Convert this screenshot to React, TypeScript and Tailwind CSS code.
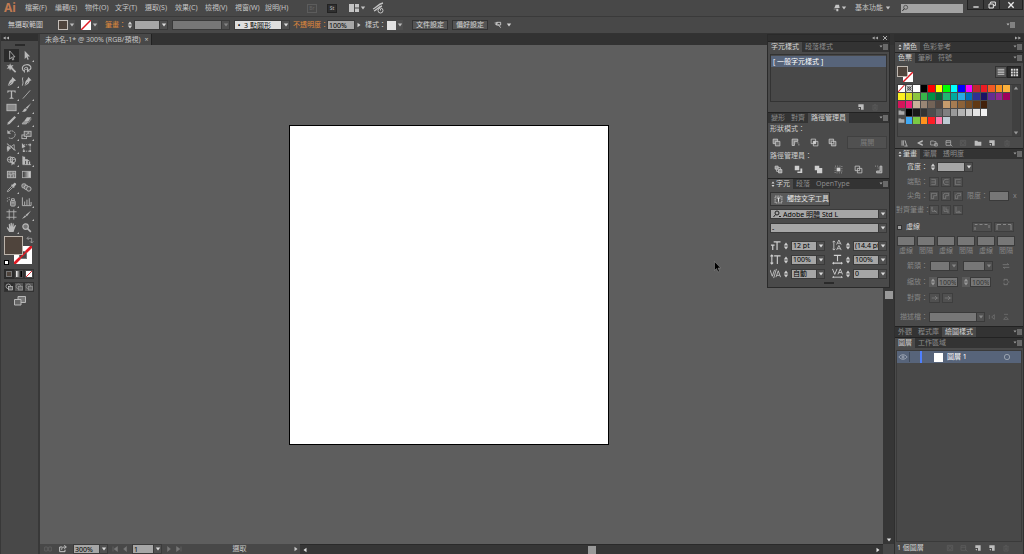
import React, { useState } from 'react';
import clsx from 'clsx';

const menus = ['檔案(F)', '編輯(E)', '物件(O)', '文字(T)', '選取(S)', '效果(C)', '檢視(V)', '視窗(W)', '說明(H)'];

// ---------------------------------------------------------------------------
// Icons
// ---------------------------------------------------------------------------

interface IconProps {
    children: React.ReactNode;
    className?: string;
}

// Every icon is drawn on a 12x12 grid
const Icon: React.FC<IconProps> = ({ children, className = 'size-3' }) => (
    <svg viewBox="0 0 12 12" fill="none" stroke="currentColor" className={clsx('shrink-0', className)} aria-hidden="true">
        {children}
    </svg>
);

const DownArrow = () => (
    <svg viewBox="0 0 6 4" className="h-1 w-1.5 shrink-0" fill="currentColor" aria-hidden="true">
        <path d="M0.8 0.5h4.4L3 3.5z" />
    </svg>
);

const MenuIcon = () => (
    <svg viewBox="0 0 10 8" className="h-2 w-2.5" fill="currentColor" aria-hidden="true">
        <path d="M0.5 2.5h3L2 4.5zM4 1.5h5v1H4zM4 3.5h5v1H4zM4 5.5h5v1H4z" />
    </svg>
);

const CollapseIcon = ({ flip = false }: { flip?: boolean }) => (
    <svg viewBox="0 0 8 6" className={clsx('h-1.5 w-2', flip && 'rotate-180')} fill="currentColor" aria-hidden="true">
        <path d="M3.700 1.500v3L1 3zM7 1.500v3L4.300 3z" />
    </svg>
);

const icons: Record<string, React.ReactNode> = {
    select: <path d="M4 1v9l2-2 1.300 3 1.200-.6L7.300 7.500H9.800z" strokeWidth=".9" />,
    direct: <path d="M4 .8v9l2-2 1.300 3 1.200-.6L7.200 7.200H10z" fill="currentColor" stroke="none" />,
    wand: <><path d="M6 5.500l4.500 4.500" strokeWidth="1.800" /><path d="M4.500.3l.9 2.500 2.800-.7-1.700 2.200 1.900 2-2.800-.3-1.200 2.500-.9-2.600-2.800.3 2-2L.7 2.200l2.900.4z" fill="currentColor" stroke="none" /></>,
    lasso: <><path d="M3.500 9C1.500 8 1 5.500 2 3.800 3.500 1.500 8 1.300 9.800 3c1.800 1.700 1 4-.8 4.700" strokeWidth="1.300" /><path d="M3.500 6.500c0-2 3.500-2.500 4-1 .3 1.500-3 2-4 1zM3.800 7.500v3" /><path d="M6.500 5v5.500l1.300-1.300h2z" fill="currentColor" stroke="none" /></>,
    pen: <><path d="M7 1l4 4-2.500 1C8 8.500 6 10 2 11c1-4 2-6.500 4-7.500z" fill="currentColor" stroke="none" /><path d="M2.500 10.500L6 7" stroke="#484848" strokeWidth=".7" /></>,
    curvature: <><path d="M8 1l3.500 3.500-2 1C9 8 7.500 9.500 4 10.500c.5-3.500 1-6 3-7z" fill="currentColor" stroke="none" /><path d="M4.500 10L7.500 6.500" stroke="#484848" strokeWidth=".7" /><path d="M2 1.500C.5 4 3.500 6 1.500 10.500" /></>,
    type: <path d="M1.500 1.500h9v2.500h-.8l-.7-1.300H6.700v6.700l1.500.4v.7H3.800v-.7l1.500-.4V2.700H3l-.7 1.300h-.8z" fill="currentColor" stroke="none" />,
    line: <path d="M2 10.500L10 1.500" strokeWidth=".9" />,
    rect: <rect x="1" y="2.500" width="10" height="7" fill="#8a8a8a" />,
    brush: <path d="M11.300 1L6.700 7.500 5.200 6.300zM4.700 6.700l1.700 1.500C6 10.500 3.500 11 .8 10.500 3 9.700 2.500 7.700 4.700 6.700z" fill="currentColor" stroke="none" />,
    pencil: <path d="M9.300 1.200l1.600 1.600L4 9.700l-2.700 1 1-2.700z" fill="currentColor" stroke="none" />,
    eraser: <><path d="M6.500 2.500h4.800L8 7H3.200z" fill="currentColor" stroke="none" /><path d="M2.700 7.500h4.600L5.800 9.800H1.200z" strokeWidth=".8" fill="#8f8f8f" /><path d="M11.300 3v2L8 9.500V7.300z" fill="#888" stroke="none" /></>,
    rotate: <><path d="M3.500 2.800C6 1 10 2.500 10 6s-4 5.500-7 3.500" strokeDasharray="2 .7" /><path d="M1.500 1.200v4h4z" fill="currentColor" stroke="none" /></>,
    scale: <><rect x="1" y="6.500" width="5" height="4" /><rect x="3.500" y="2.500" width="7.500" height="5.500" fill="#666" /><path d="M5.500 6.500l3-2.500M8.500 5.500V4H7" strokeWidth=".8" /></>,
    width: <><path d="M1 2c2.500 0 2 3 4 3s2-2 4-2M1 10c2 0 3-4 5-4s2 3 4.500 3" /><path d="M2.500 4v6M4.500 3.500l4 5M9 3v6" strokeWidth=".8" /><path d="M1.500 5l3 1.500-3 2z" fill="currentColor" /></>,
    transform: <><rect x="3" y="3" width="7" height="7" strokeDasharray="1.200 1" /><path d="M1 1v6l1.700-1.500H5z" fill="currentColor" stroke="none" /><path d="M9 2h2v2H9zM9 9h2v2H9zM2 9h2v2H2z" fill="currentColor" stroke="none" /></>,
    shape: <><circle cx="4.500" cy="5" r="3" /><circle cx="7.500" cy="5.500" r="3" /><path d="M1.500 5h9M5 2v6" strokeWidth=".7" /><path d="M6 5.500v6l1.500-1.500h2.500z" fill="currentColor" stroke="none" /></>,
    perspective: <><path d="M2 1v9.500h9M2 3.500l5 2.500M2 6h7" strokeWidth=".9" /><path d="M2 2h2.500v8H2zM5.500 4.500h2v6h-2zM8.500 7h1.500v3.500H8.500z" fill="currentColor" stroke="none" /></>,
    mesh: <><rect x="1.500" y="2.500" width="9" height="7" fill="#777" /><path d="M1.500 6c2-2 3.500 2 5 0s2.500-1 4 0M4.500 2.500c-1.500 2.500 1.500 4 0 7M8 2.500c-1.500 2.500 1 4 0 7" strokeWidth=".8" /></>,
    gradient: <><defs><linearGradient id="toolGradient"><stop offset="0" stopColor="#333" /><stop offset="1" stopColor="#ddd" /></linearGradient></defs><rect x="1.500" y="2.500" width="9" height="7" fill="url(#toolGradient)" strokeWidth=".8" /></>,
    eyedropper: <><path d="M7 3l2-2c1-.6 2.600 1 2 2L9 5l.5.5-1 1-3-3 1-1z" fill="currentColor" stroke="none" /><path d="M6.300 4.500L2 9l-.5 1.500L3 10l4.500-4.300" strokeWidth=".9" /></>,
    blend: <><rect x="1" y="2" width="4.500" height="4.500" rx="1.500" fill="#777" /><circle cx="5.800" cy="6" r="2.300" fill="#666" /><circle cx="8.500" cy="7.500" r="2.500" fill="#555" /></>,
    spray: <><rect x="5" y="5" width="5" height="6" rx="1" fill="#777" /><path d="M6 5V3h3v2M6 7.500h3" /><path d="M1 2h1v1H1zM3 1h1v1H3zM3 3.500h1v1H3zM1 5h1v1H1z" fill="currentColor" stroke="none" /></>,
    graph: <path d="M1.500 1.500v9h9.500v-4M4 10V6M6.500 10V4M9 10V2.500" />,
    artboard: <path d="M3.500.5v11M8.500.5v11M.5 3h11M.5 9h11" strokeWidth=".9" />,
    slice: <path d="M11 1.500L6.500 8 4.700 6.700zM4.200 7.200l1.500 1.300L1 11z" fill="currentColor" stroke="none" />,
    hand: <path d="M3.500 11L1 6.800c-.5-1 .8-1.300 1.300-.6L3.400 7.500 3 2.700c0-.9 1.200-.9 1.300 0l.5 2.600.2-3.900c.1-.9 1.300-.9 1.400 0l.1 3.900.7-3.400c.2-.8 1.400-.6 1.300.3L8.200 5.800 9.600 3.600c.5-.7 1.500-.2 1.200.6L9 8.500 8.300 11z" fill="currentColor" stroke="none" />,
    zoom: <><circle cx="5" cy="5" r="3" fill="#777" strokeWidth="1.300" /><path d="M7.200 7.200l3.500 3.500" strokeWidth="1.800" /></>,
    newItem: <><path d="M2 2h8v8H6V6H2z" fill="currentColor" stroke="none" /><path d="M2 7.500h2.500V10z" fill="currentColor" stroke="none" /></>,
    trash: <path d="M2 3.500h8M5 3V2h2v1M3 4v6.500h6V4M5 5v4M7 5v4" strokeWidth=".9" />,
    folder: <path d="M1 2.500h4l1 1.500h5v6H1z" fill="currentColor" stroke="none" />,
    swap: <path d="M1 4h9L8 2M11 8H2l2 2" />,
    flip: <path d="M2 3v6M9.500 2.500v7L5.500 6z" />,
    libs: <path d="M1.500 2v8M3.500 2v8M6 2l2.500 8M5 10.500h5" strokeWidth="1.300" />,
    kinds: <path d="M10 1.500v3L5 6l5 1.500v3L2 6.500v-1z" fill="currentColor" stroke="none" />,
    swatchGroup: <path d="M1 3h4l1 1h3v5H1zM7 6.500h4v4H7z" />,
    options: <path d="M1.500 2.500h7v7h-7zM1.500 5h7M8 8l3 3" />,
    locate: <path d="M2 2h8v8H2zM4 4h4v4H4z" />,
};

interface Tool {
    icon: string;
    name: string;
    more?: boolean;
}

const toolGroups: Tool[][] = [
    [
        { icon: 'select', name: '選取工具' }, { icon: 'direct', name: '直接選取工具', more: true },
        { icon: 'wand', name: '魔術棒工具' }, { icon: 'lasso', name: '套索工具' },
        { icon: 'pen', name: '鋼筆工具', more: true }, { icon: 'curvature', name: '曲線工具' },
        { icon: 'type', name: '文字工具', more: true }, { icon: 'line', name: '線段區段工具', more: true },
        { icon: 'rect', name: '矩形工具', more: true }, { icon: 'brush', name: '繪圖筆刷工具', more: true },
        { icon: 'pencil', name: '鉛筆工具', more: true }, { icon: 'eraser', name: '橡皮擦工具', more: true },
    ],
    [
        { icon: 'rotate', name: '旋轉工具', more: true }, { icon: 'scale', name: '縮放工具', more: true },
        { icon: 'width', name: '寬度工具', more: true }, { icon: 'transform', name: '任意變形工具' },
        { icon: 'shape', name: '形狀建立程式工具', more: true }, { icon: 'perspective', name: '透視格點工具', more: true },
    ],
    [
        { icon: 'mesh', name: '網格工具' }, { icon: 'gradient', name: '漸層工具' },
        { icon: 'eyedropper', name: '檢色滴管工具', more: true }, { icon: 'blend', name: '漸變工具' },
    ],
    [
        { icon: 'spray', name: '符號噴灑器工具', more: true }, { icon: 'graph', name: '長條圖工具', more: true },
        { icon: 'artboard', name: '工作區域工具' }, { icon: 'slice', name: '切片工具', more: true },
        { icon: 'hand', name: '手形工具', more: true }, { icon: 'zoom', name: '放大鏡工具' },
    ],
];

// Swatch library, 'none' and 'reg' are the two special swatches
const swatchRows = [
    ['none', 'reg', '#ffffff', '#000000', '#ff0000', '#ffff00', '#00ff00', '#00ffff', '#0000ff', '#ff00ff', '#c1272d', '#ed1c24', '#f15a24', '#f7931e', '#fbb03b'],
    ['#fcee21', '#d9e021', '#8cc63f', '#39b54a', '#009245', '#006837', '#22b573', '#00a99d', '#29abe2', '#0071bc', '#2e3192', '#1b1464', '#662d91', '#93278f', '#9e005d'],
    ['#d4145a', '#ed1e79', '#c7b299', '#998675', '#736357', '#534741', '#c69c6d', '#a67c52', '#8c6239', '#754c24', '#603813', '#42210b'],
];
const grayGroup = ['#000000', '#1a1a1a', '#333333', '#4d4d4d', '#666666', '#808080', '#999999', '#b3b3b3', '#cccccc', '#e6e6e6', '#f2f2f2'];
const brightGroup = ['#3fa9f5', '#7ac943', '#ff931e', '#ff1d25', '#ff7bac', '#bdccd4'];

// ---------------------------------------------------------------------------
// Shared controls
// ---------------------------------------------------------------------------

const Slash = ({ className = '' }: { className?: string }) => (
    <svg viewBox="0 0 10 10" preserveAspectRatio="none" className={clsx('block bg-white', className)} aria-hidden="true">
        <path d="M0 10L10 0" stroke="#e01b24" strokeWidth="1.500" />
    </svg>
);

interface DropdownProps {
    id: string;
    label?: string;
    value?: string;
    className?: string;
    dim?: boolean;
    light?: boolean;
    search?: boolean;
}

const Dropdown: React.FC<DropdownProps> = ({ id, label, value = '', className, dim, light, search }) => (
    <div className={clsx('relative h-2.5 shrink-0', className)}>
        <select
            id={id}
            aria-label={label}
            className={clsx(
                'block h-full w-full appearance-none border border-[#3a3a3a] py-0 pr-2 leading-none outline-none',
                search ? 'pl-3' : 'pl-px',
                dim ? 'bg-[#777] text-[#444]' : light ? 'bg-[#dedede] text-black' : 'bg-[#a6a6a6] text-black'
            )}
        >
            <option>{value}</option>
        </select>
        <span className={clsx('pointer-events-none absolute inset-y-0 right-0 flex w-[9px] items-center justify-center border border-[#3a3a3a] bg-[#505050]', dim ? 'text-[#858585]' : 'text-[#dcdcdc]')}>
            <DownArrow />
        </span>
    </div>
);

const Stepper = ({ dim = false }: { dim?: boolean }) => (
    <div className={clsx('flex h-2.5 w-2 shrink-0 flex-col items-center justify-center', dim ? 'bg-[#5a5a5a] text-[#999]' : 'text-[#d0d0d0]')}>
        <button aria-label="增加" className="h-1 rotate-180"><DownArrow /></button>
        <button aria-label="減少" className="h-1"><DownArrow /></button>
    </div>
);

interface FieldProps {
    id: string;
    label?: string;
    value?: string;
    className?: string;
    dim?: boolean;
}

const Field: React.FC<FieldProps> = ({ id, label, value = '', className, dim }) => (
    <input
        id={id}
        aria-label={label}
        defaultValue={value}
        className={clsx('h-2.5 min-w-0 shrink-0 rounded-none border border-[#3a3a3a] px-px leading-none outline-none', dim ? 'bg-[#777] text-[#333]' : 'bg-[#a6a6a6] text-black', className)}
    />
);

interface TabsProps {
    tabs: string[];
    initial: string;
    collapsible?: boolean;
}

const PanelTabs: React.FC<TabsProps> = ({ tabs, initial, collapsible }) => {
    const [active, setActive] = useState(initial);

    return (
        <div className="flex h-[11px] shrink-0 items-stretch border-t border-[#222] bg-[#333]" role="tablist">
            {tabs.map(tab => (
                <button
                    key={tab}
                    role="tab"
                    aria-selected={tab === active}
                    onClick={() => setActive(tab)}
                    className={clsx('flex items-center gap-px px-[3px]', tab === active ? 'bg-[#4a4a4a] text-[#d6d6d6]' : 'text-[#8c8c8c]')}
                >
                    {collapsible && tab === initial && (
                        <svg viewBox="0 0 4 8" className="h-2 w-1" fill="currentColor" aria-hidden="true"><path d="M.5 3.500L2 1.500l1.500 2zM.5 5L2 7l1.500-2z" /></svg>
                    )}
                    {tab}
                </button>
            ))}
            <button aria-label="面板選單" className="ml-auto text-[#a0a0a0]"><MenuIcon /></button>
        </div>
    );
};

const IconButton: React.FC<{ icon: string; label: string; dim?: boolean }> = ({ icon, label, dim }) => (
    <button aria-label={label} className={clsx('flex items-center', dim ? 'text-[#606060]' : 'text-[#bdbdbd]')}>
        <Icon className="size-2">{icons[icon]}</Icon>
    </button>
);

// ---------------------------------------------------------------------------
// Top bars
// ---------------------------------------------------------------------------

const MenuBar = () => (
    <header className="flex h-4 shrink-0 items-center bg-[#484848] text-[#c4c4c4]">
        <span className="w-[25px] pl-1 text-[12px] leading-4 font-bold text-[#c07a52]">Ai</span>
        <nav className="flex items-center">
            {menus.map(menu => (
                <button key={menu} className="w-[30px] shrink-0 text-left whitespace-nowrap">{menu}</button>
            ))}
        </nav>
        <div className="flex items-center pl-3">
            <button className="h-[9px] w-[10px] border border-[#5c5c5c] text-[5px] leading-[7px] text-[#666]">Br</button>
            <button className="ml-2.5 h-[9px] w-[10px] border border-[#222] bg-[#2f2f2f] text-[5px] leading-[7px] text-[#bbb]">St</button>
            <button aria-label="排列文件" className="ml-3 flex items-center gap-px">
                <svg viewBox="0 0 10 8" className="h-2 w-2.5" fill="currentColor" aria-hidden="true"><path d="M0 0h5v8H0zM6 0h4v3.500H6zM6 4.500h4V8H6z" /></svg>
                <DownArrow />
            </button>
            <button aria-label="GPU 效能" className="ml-1.5">
                <Icon>
                    <path d="M1 7c3-1 5-5 10-6M2 9c3-1 4-4 8-5" strokeWidth="1.300" />
                    <circle cx="8.500" cy="8.500" r="2.500" />
                    <path d="M8.500 7v1.500" />
                </Icon>
            </button>
        </div>
        <div className="ml-auto flex h-full items-center">
            <button aria-label="同步設定" className="flex items-center">
                <Icon className="size-2"><path d="M4 1h5l1 5H2zM1 7h7v1H1zM5 8v3h3V8" fill="currentColor" stroke="none" /></Icon>
                <DownArrow />
            </button>
            <button className="ml-2 flex items-center gap-0.5 whitespace-nowrap">基本功能<DownArrow /></button>
            <label className="ml-2.5 flex h-[9px] w-[62px] items-center bg-[#a3a3a3] text-[#333]">
                <Icon className="size-2"><circle cx="7" cy="5" r="3" /><path d="M5 7l-3 3.500" strokeWidth="1.500" /></Icon>
                <input type="search" aria-label="搜尋" className="w-full min-w-0 bg-transparent outline-none" />
            </label>
            <div className="mr-px ml-1 flex h-2.5 self-start border border-t-0 border-[#222] bg-[#3c3c3c] text-[#e8e8e8]">
                <button aria-label="最小化" className="flex w-4 items-center justify-center border-r border-[#222]"><Icon className="size-2"><path d="M2 9h8" strokeWidth="2" /></Icon></button>
                <button aria-label="還原" className="flex w-4 items-center justify-center border-r border-[#222]"><Icon className="size-2"><path d="M4 4V1.500h7V7H8.500M1.500 4.500h6.500v6H1.500z" strokeWidth="1.500" /></Icon></button>
                <button aria-label="關閉" className="flex w-[22px] items-center justify-center"><Icon className="size-2"><path d="M2 2l8 8M10 2l-8 8" strokeWidth="2" /></Icon></button>
            </div>
        </div>
    </header>
);

const SmallArrow = ({ label }: { label: string }) => (
    <button aria-label={label} className="flex h-2.5 w-[7px] items-center justify-center bg-[#4e4e4e] text-[#bbb]"><DownArrow /></button>
);

const OptionsBar = () => (
    <div className="flex h-[18px] shrink-0 items-center border-t border-b border-t-[#3a3a3a] border-b-[#333] bg-[#484848] whitespace-nowrap text-[#d2d2d2]">
        <span className="w-[58px] pl-2">無選取範圍</span>
        <button aria-label="填色" className="size-2.5 border border-[#c4beb8] bg-[#4f443c]" />
        <SmallArrow label="填色選單" />
        <button aria-label="筆畫顏色" className="ml-1.5"><Slash className="size-2.5" /></button>
        <SmallArrow label="筆畫顏色選單" />
        <label htmlFor="stroke-weight" className="ml-[7px] w-[21px] text-[#e08a3c]">筆畫：</label>
        <Stepper />
        <Dropdown id="stroke-weight" className="w-[34px]" />
        <Dropdown id="width-profile" label="變數寬度描述檔" className="ml-1 w-[58px]" dim />
        <Dropdown id="brush" label="筆刷定義" value={'\u00a0•\u00a0\u00a03 點圓形'} className="ml-1 w-[56px]" light />
        <label htmlFor="opacity" className="ml-[3px] w-[34px] text-[#e08a3c]">不透明度：</label>
        <Field id="opacity" value="100%" className="w-[28px]" />
        <button aria-label="不透明度滑桿" className="flex w-2 -rotate-90 justify-center"><DownArrow /></button>
        <span className="ml-0.5 w-[22px]">樣式：</span>
        <button aria-label="繪圖樣式" className="size-[9px] bg-[#e2e2e2]" />
        <SmallArrow label="樣式選單" />
        <button className="ml-[9px] h-2.5 w-9 border border-[#333] bg-[#555] leading-[8px]">文件設定</button>
        <button className="ml-1 h-2.5 w-9 border border-[#333] bg-[#555] leading-[8px]">偏好設定</button>
        <button aria-label="選取類似物件" className="ml-1.5 flex items-center gap-1">
            <Icon className="size-2"><path d="M1 3h5M4 2h6v4H4zM6 5l4 5M2 5l3 1" strokeWidth="1.300" /></Icon>
            <DownArrow />
        </button>
        <button aria-label="控制面板選單" className="mr-2 ml-auto text-[#bbb]"><MenuIcon /></button>
    </div>
);

// ---------------------------------------------------------------------------
// Tool box
// ---------------------------------------------------------------------------

const ToolBox = () => {
    const [current, setCurrent] = useState('select');

    return (
        <aside className="flex w-10 shrink-0 flex-col border-r-2 border-l border-[#383838] bg-[#484848] text-[#b8b8b8]">
            <div className="flex h-[7px] items-center bg-[#303030] pl-px"><CollapseIcon /></div>
            <div className="flex h-2 items-center justify-center"><span className="h-0.5 w-2.5 bg-[#2a2a2a]" /></div>
            <div className="flex flex-col gap-px px-[3px]">
                {toolGroups.map((group, i) => (
                    <div key={i} className="grid grid-cols-[15px_15px]">
                        {group.map(tool => (
                            <button
                                key={tool.icon}
                                aria-label={tool.name}
                                onClick={() => setCurrent(tool.icon)}
                                className={clsx('relative flex h-[13px] items-center justify-center', current === tool.icon && 'bg-[#2b2b2b]')}
                            >
                                <Icon className="size-[11px]">{icons[tool.icon]}</Icon>
                                {tool.more && (
                                    <svg viewBox="0 0 2 2" className="absolute right-0 bottom-0 size-0.5" fill="currentColor" aria-hidden="true"><path d="M2 0v2H0z" /></svg>
                                )}
                            </button>
                        ))}
                    </div>
                ))}
            </div>
            {/* Fill and stroke */}
            <div className="relative mt-0.5 ml-[3px] h-[29px]">
                <button aria-label="筆畫" className="absolute top-2.5 left-2.5">
                    <Slash className="size-[18px]" />
                    <span className="absolute inset-[5px] border border-[#777] bg-[#484848]" />
                    <svg viewBox="0 0 18 18" className="absolute inset-0 size-[18px]" aria-hidden="true"><path d="M0 18L18 0" stroke="#e01b24" strokeWidth="1.500" /></svg>
                </button>
                <button aria-label="填色" className="absolute top-0 left-0 size-[19px] border border-[#bbb3aa] bg-[#4f443c]" />
                <button aria-label="切換填色與筆畫" className="absolute top-0 right-1"><Icon className="size-2"><path d="M2 3.500h6.500V10M4 1L1.500 3.500 4 6M6 8l2.500 2.500L11 8" /></Icon></button>
                <button aria-label="預設填色與筆畫" className="absolute bottom-0 left-0 size-[5px] border border-black bg-white" />
            </div>
            <div className="mt-1 ml-[3px] flex h-2.5">
                <button aria-label="顏色" className="flex w-2.5 items-center justify-center bg-[#2b2b2b]"><span className="size-1.5 border border-[#777] bg-[#4f443c]" /></button>
                <button aria-label="漸層" className="flex w-2.5 items-center justify-center border border-[#333]"><span className="size-1.5 bg-linear-to-r from-white to-black" /></button>
                <button aria-label="無" className="flex w-2.5 items-center justify-center border border-[#333]"><Slash className="size-1.5" /></button>
            </div>
            <div className="mt-[3px] ml-[3px] flex h-2.5 items-center">
                {['一般繪製', '繪製下層', '繪製內側'].map((mode, i) => (
                    <button key={mode} aria-label={mode} className={clsx('flex size-2.5 items-center justify-center border border-[#333]', i === 0 ? 'bg-[#2e2e2e] text-[#ccc]' : 'bg-[#555] text-[#999]')}>
                        <Icon className="size-2"><circle cx="5" cy="5" r="3.500" /><rect x="5" y="5" width="6" height="5.500" fill="#666" /></Icon>
                    </button>
                ))}
            </div>
            <button aria-label="變更螢幕模式" className="mt-[3px] flex justify-center">
                <Icon><path d="M4 1.500h7.500v6H4z" fill="#777" /><path d="M.5 4.500H7V10H.5z" fill="#666" /></Icon>
            </button>
        </aside>
    );
};

// ---------------------------------------------------------------------------
// Floating panels: character styles, pathfinder, character
// ---------------------------------------------------------------------------

const shapeModes = [
    { name: '聯集', d: <><path d="M1.500 1.500h6v6h-6z" fill="#858585" /><path d="M4.500 4.500h6v6h-6z" fill="#707070" /></> },
    { name: '減去上層', d: <><path d="M1.500 10V1.500H9v3H4.500V10z" fill="#858585" /><path d="M6 6.500h4.500v4" strokeDasharray="1 1" /></> },
    { name: '交集', d: <><path d="M1.500 1.500h6v6h-6zM4.500 4.500h6v6h-6z" /><path d="M4.500 4.500h3v3h-3z" fill="currentColor" /></> },
    { name: '差集', d: <><path d="M1.500 1.500h6v6h-6zM4.500 4.500h6v6h-6z" fill="#777" /><path d="M5 5h2v2H5z" fill="#484848" stroke="none" /></> },
];

const pathfinders = [
    { name: '分割', d: <><path d="M1.500 1.500h4v4h-4zM6 6h4.500v4.500H6z" fill="#999" /><path d="M5.500 3.500h3v2.500M3.500 5.500v3H6" /></> },
    { name: '剪裁覆蓋範圍', d: <><path d="M1 1h6v6H1z" fill="currentColor" stroke="none" /><path d="M4.500 8.500v2H11V4.500H8.500v4z" fill="currentColor" stroke="none" /></> },
    { name: '合併', d: <path d="M1 1h6v3h4v7H4V7H1z" fill="currentColor" stroke="none" /> },
    { name: '裁切', d: <><path d="M1.500 1.500h9v9h-9z" strokeDasharray="1 2" /><path d="M3.500 3.500h5v5h-5z" fill="currentColor" stroke="none" /></> },
    { name: '外框', d: <path d="M1.500 1.500h6v3h-3v3h-3zM7.500 4.500h3v6h-6v-3h3z" /> },
    { name: '依後置物件剪裁', d: <><path d="M8 1.500h2.500v9h-7V8H8z" fill="#888" /><path d="M1.500 1.500h4v4" strokeDasharray="1 2" /></> },
];

const characterRows = [
    [
        { id: 'font-size', label: '字體大小', value: '12 pt', icon: <path d="M4 2h7.500M7.700 2v9M1 5.500h4M3 5.500V11" strokeWidth="1.300" /> },
        { id: 'leading', label: '行距', value: '(14.4 pt)', icon: <path d="M2 1v10M.5 2.500L2 1l1.500 1.500M.5 9.500L2 11l1.500-1.500M5 5L7.500 0 10 5M6 3.500h3M5 11L7.500 6 10 11M6 9.500h3" strokeWidth=".9" /> },
    ],
    [
        { id: 'v-scale', label: '垂直縮放', value: '100%', icon: <path d="M2 1v10M.5 2.500L2 1l1.500 1.500M.5 9.500L2 11l1.500-1.500M4.500 2h7M8 2v9" strokeWidth="1.200" /> },
        { id: 'h-scale', label: '水平縮放', value: '100%', icon: <path d="M2 1.500h8M6 1.500v6.500M1 10h10M2 9L1 10l1 1M10 9l1 1-1 1" strokeWidth="1.200" /> },
    ],
    [
        { id: 'kerning', label: '字距微調', value: '自動', icon: <path d="M0 2l2.500 7L5 2M6.500 10L9 3l2.500 7M7.500 8h3M7 1L4 11" strokeWidth=".9" /> },
        { id: 'tracking', label: '字距調整', value: '0', icon: <path d="M.5 1L3 7l2.500-6M6.500 7L9 1l2.500 6M7.500 5h3M.5 10h11M2 9l-1 1 1 1M10 9l1 1-1 1" strokeWidth="1" /> },
    ],
];

const FloatingPanels = () => (
    <section className="absolute top-0 right-1 w-[123px] border border-[#2a2a2a] bg-[#4a4a4a] whitespace-nowrap text-[#cfcfcf]">
        <div className="flex h-1.5 items-center justify-end gap-1 bg-[#2f2f2f] pr-0.5 text-[#aaa]">
            <CollapseIcon />
            <button aria-label="關閉面板"><svg viewBox="0 0 4 4" className="size-1" aria-hidden="true"><path d="M0 0l4 4M4 0L0 4" stroke="currentColor" /></svg></button>
        </div>
        <PanelTabs tabs={['字元樣式', '段落樣式']} initial="字元樣式" />
        <div className="px-0.5 pt-0.5">
            <ul className="h-[48px] border border-[#333] bg-[#484848] py-px">
                <li className="h-[11px] bg-[#57647a] pl-0.5 leading-[11px] text-white">[ 一般字元樣式 ]</li>
            </ul>
            <div className="flex h-[10px] items-center justify-end gap-1.5 pr-2">
                <IconButton icon="newItem" label="建立新樣式" />
                <IconButton icon="trash" label="刪除樣式" dim />
            </div>
        </div>

        <PanelTabs tabs={['變形', '對齊', '路徑管理員']} initial="路徑管理員" />
        <div className="flex flex-col gap-px px-0.5 py-px">
            <p className="h-2.5">形狀模式：</p>
            <div className="flex h-[15px] items-center pl-0.5">
                {shapeModes.map(mode => (
                    <button key={mode.name} aria-label={mode.name} className="w-[19px]"><Icon className="size-[9px]">{mode.d}</Icon></button>
                ))}
                <button disabled className="ml-auto h-[13px] w-10 border border-[#404040] bg-[#505050] text-[#7c7c7c]">展開</button>
            </div>
            <p className="h-2.5">路徑管理員：</p>
            <div className="flex h-[15px] items-center justify-between px-1">
                {pathfinders.map(mode => (
                    <button key={mode.name} aria-label={mode.name}><Icon className="size-[9px]">{mode.d}</Icon></button>
                ))}
            </div>
        </div>

        <PanelTabs tabs={['字元', '段落', 'OpenType']} initial="字元" collapsible />
        <div className="flex flex-col px-0.5 pt-[3px]">
            <button className="flex h-[14px] w-[60px] items-center gap-1 border border-[#333] bg-[#5a5a5a] pl-[3px] text-[#e2e2e2]">
                <Icon className="size-[9px]"><path d="M1.500 1.500h9v9h-9z" strokeDasharray="2 1" /><path d="M3.500 4h5M6 4v5" strokeWidth="1.300" /></Icon>
                觸控文字工具
            </button>
            <div className="relative mt-[3px]">
                <Dropdown id="font-family" label="字體" value="Adobe 明體 Std L" className="w-full" search />
                <svg viewBox="0 0 10 10" className="pointer-events-none absolute top-0 left-0.5 size-2.5" fill="none" stroke="#222" aria-hidden="true"><circle cx="5" cy="4" r="2" /><path d="M3.500 5.500L1.500 8M7 7.500h2" /></svg>
            </div>
            <Dropdown id="font-style" label="字體樣式" value="-" className="mt-1 w-full" />
            <div className="mt-[7px] flex flex-col gap-[3px]">
                {characterRows.map(row => (
                    <div key={row[0].id} className="flex items-center justify-between">
                        {row.map(item => (
                            <div key={item.id} className="flex items-center gap-px">
                                <Icon className="size-[11px]">{item.icon}</Icon>
                                <Stepper />
                                <Dropdown id={item.id} label={item.label} value={item.value} className="w-[34px]" />
                            </div>
                        ))}
                    </div>
                ))}
            </div>
            <div className="flex h-2 items-center justify-center"><span className="h-0.5 w-2.5 bg-[#2a2a2a]" /></div>
        </div>
    </section>
);

// ---------------------------------------------------------------------------
// Docked panels
// ---------------------------------------------------------------------------

const Swatch = ({ color }: { color: string }) => {
    if (color === 'none') return <Slash className="h-[7px] w-full" />;
    if (color === 'reg') {
        return (
            <svg viewBox="0 0 8 8" className="h-[7px] w-full bg-[#ddd]" fill="none" stroke="#333" aria-hidden="true"><circle cx="4" cy="4" r="2" /><path d="M0 0l8 8M8 0L0 8" strokeWidth=".8" /></svg>
        );
    }
    return <button aria-label={color} className="h-[7px]" style={{ backgroundColor: color }} />;
};

const SwatchGroup = ({ colors }: { colors: string[] }) => (
    <div className="grid grid-cols-15 gap-x-px">
        <span className="flex h-[7px] items-center justify-center text-[#aaa]"><Icon className="size-[7px]">{icons.folder}</Icon></span>
        {colors.map(color => <Swatch key={color} color={color} />)}
    </div>
);

const SwatchesPanel = () => (
    <div className="px-0.5 pt-[3px]">
        <div className="flex h-[18px] justify-between">
            <div className="relative w-4">
                <Slash className="absolute top-1.5 left-1.5 size-2.5" />
                <span className="absolute top-0 left-0 size-[11px] border border-[#c0b8b0] bg-[#4f443c]" />
            </div>
            <div className="flex h-3 text-[#ddd]">
                <button aria-label="清單檢視" className="flex w-3 items-center justify-center border border-[#333] bg-[#555]"><Icon className="size-2"><path d="M1 2h10M1 4.500h10M1 7h10M1 9.500h10" strokeWidth="1.200" /></Icon></button>
                <button aria-label="縮圖檢視" className="flex w-3.5 items-center justify-center border border-[#222] bg-[#2b2b2b]"><Icon className="size-[9px]"><path d="M2.500 1v10M6 1v10M9.500 1v10" strokeWidth="2.500" /><path d="M1 4.200h10M1 7.800h10" stroke="#2b2b2b" /></Icon></button>
            </div>
        </div>
        <div className="flex h-[53px] border border-[#3a3a3a]">
            <div className="flex w-[112px] flex-col gap-px">
                <div className="grid grid-cols-15 gap-px">
                    {swatchRows.flat().map(color => <Swatch key={color} color={color} />)}
                </div>
                <SwatchGroup colors={grayGroup} />
                <SwatchGroup colors={brightGroup} />
            </div>
            <div className="ml-auto flex w-2 flex-col items-center justify-between bg-[#404040] py-px text-[#999]">
                <span className="rotate-180 leading-none"><DownArrow /></span>
                <DownArrow />
            </div>
        </div>
        <div className="flex h-[11px] items-center justify-between pr-2.5 pl-1">
            <IconButton icon="libs" label="色票資料庫選單" />
            <IconButton icon="kinds" label="顯示色票種類選單" />
            <IconButton icon="swatchGroup" label="新增至資料庫" />
            <IconButton icon="options" label="色票選項" />
            <IconButton icon="locate" label="色票資訊" dim />
            <IconButton icon="folder" label="新增顏色群組" />
            <IconButton icon="newItem" label="新增色票" />
            <IconButton icon="trash" label="刪除色票" dim />
        </div>
    </div>
);

const strokeIcons: Record<string, React.ReactNode[]> = {
    端點: [
        <path d="M2 2h6v8H2M2 6h6" />,
        <path d="M10 2H6a4 4 0 000 8h4M5 6h5" />,
        <path d="M10 2H2v8h8M5 6h5" />,
    ],
    尖角: [
        <path d="M2 10V2h8v3.500H5.500V10z" />,
        <path d="M2 10V5a3 3 0 013-3h5v3.500H5.500V10z" />,
        <path d="M2 10V5l3-3h5v3.500H5.500V10z" />,
    ],
    對齊筆畫: [
        <path d="M3 1v7h7M2 3h2M6 6l4 4" />,
        <path d="M3 1v7h7M6 2v4h4M8 10h2" />,
        <path d="M3 1v9h8M5 8h4" />,
    ],
};

const StrokeButtons = ({ name }: { name: string }) => (
    <div className="flex h-2.5 gap-0.5" role="group" aria-label={name}>
        {strokeIcons[name].map((d, i) => (
            <button key={i} aria-label={`${name} ${i + 1}`} className="flex size-2.5 items-center justify-center border border-[#3e3e3e] bg-[#505050]">
                <Icon className="size-2">{d}</Icon>
            </button>
        ))}
    </div>
);

// Label column is right-aligned up to the controls
const rowLabel = 'w-[33px] shrink-0 pr-px text-right';

const StrokePanel = () => (
    <div className="flex flex-col px-px whitespace-nowrap text-[#878787]">
        <div className="flex h-4 items-center text-[#d6d6d6]">
            <label htmlFor="panel-weight" className={rowLabel}>寬度：</label>
            <Stepper />
            <Dropdown id="panel-weight" className="w-9" />
        </div>
        <div className="flex h-[14px] items-center">
            <span className={rowLabel}>端點：</span>
            <StrokeButtons name="端點" />
        </div>
        <div className="flex h-[14px] items-center">
            <span className={rowLabel}>尖角：</span>
            <StrokeButtons name="尖角" />
            <label htmlFor="miter" className="ml-1 w-[22px] shrink-0">限度：</label>
            <Field id="miter" className="w-5" dim />
            <span className="ml-1">x</span>
        </div>
        <div className="flex h-[14px] items-center">
            <span className={rowLabel}>對齊筆畫：</span>
            <StrokeButtons name="對齊筆畫" />
        </div>
        <div className="mt-0.5 flex h-4 items-center">
            <label className="flex items-center gap-1 text-[#d6d6d6]">
                <input type="checkbox" className="ml-px size-[5px] appearance-none border border-[#333] bg-[#a0a0a0] checked:bg-white" />
                虛線
            </label>
            <div className="mr-2 ml-auto flex gap-0.5">
                <button aria-label="保留精確的虛線" className="h-2.5 w-5 border border-[#3e3e3e] bg-[#505050]"><svg viewBox="0 0 18 8" className="mx-auto h-2" fill="none" stroke="currentColor" aria-hidden="true"><path d="M2 7V1.500h14V7" strokeDasharray="3 2" /></svg></button>
                <button aria-label="虛線對齊轉角" className="h-2.5 w-5 border border-[#3e3e3e] bg-[#505050]"><svg viewBox="0 0 18 8" className="mx-auto h-2" fill="none" stroke="currentColor" aria-hidden="true"><path d="M2 7V1.500h4M8 1.500h3M13 1.500h3V7" /></svg></button>
            </div>
        </div>
        <div className="mt-px flex gap-0.5 pl-px">
            {['虛線', '間隔', '虛線', '間隔', '虛線', '間隔'].map((label, i) => (
                <label key={i} className="flex w-[18px] flex-col items-center">
                    <Field id={`dash-${i}`} className="w-[18px]" dim />
                    {label}
                </label>
            ))}
        </div>
        <div className="mt-0.5 flex h-4 items-center gap-x-px">
            <span className={rowLabel}>箭頭：</span>
            <Dropdown id="arrow-start" label="起點箭頭" className="w-7" dim />
            <Dropdown id="arrow-end" label="終點箭頭" className="ml-1 w-[30px]" dim />
            <button aria-label="交換箭頭" className="mr-3 ml-auto"><Icon className="size-2">{icons.swap}</Icon></button>
        </div>
        <div className="flex h-4 items-center">
            <span className={rowLabel}>縮放：</span>
            <Stepper dim />
            <Field id="arrow-scale-start" label="起點縮放" value="100%" className="w-[21px]" dim />
            <span className="w-1" />
            <Stepper dim />
            <Field id="arrow-scale-end" label="終點縮放" value="100%" className="w-[21px]" dim />
            <button aria-label="連結縮放" className="mr-3 ml-auto"><Icon className="size-2"><path d="M3 5V2h5v3M3 7v3h5V7M9 6h2" /></Icon></button>
        </div>
        <div className="flex h-4 items-center">
            <span className={rowLabel}>對齊：</span>
            <div className="flex gap-0.5">
                {['延伸箭頭', '箭頭置於路徑終點'].map(name => (
                    <button key={name} aria-label={name} className="flex h-2.5 w-[11px] items-center justify-center border border-[#3e3e3e] bg-[#505050]"><Icon className="size-2"><path d="M1 6h10M6 3l3 3-3 3" /></Icon></button>
                ))}
            </div>
        </div>
        <div className="mt-0.5 flex h-[18px] items-center">
            <label htmlFor="profile" className={rowLabel}>描述檔：</label>
            <Dropdown id="profile" className="w-14" dim />
            <button aria-label="水平翻轉" className="mr-1.5 ml-auto text-[#777]"><Icon className="size-2">{icons.flip}</Icon></button>
            <button aria-label="垂直翻轉" className="mr-3 rotate-90 text-[#777]"><Icon className="size-2">{icons.flip}</Icon></button>
        </div>
    </div>
);

const LayersPanel = () => (
    <div className="flex min-h-0 flex-1 flex-col px-px pt-0.5">
        <ul className="flex-1 border border-[#3a3a3a] bg-[#484848]">
            <li className="flex h-3 items-center bg-[#57647a] text-white">
                <button aria-label="切換可見度" className="flex w-[13px] justify-center border-r border-[#3f4a5a] text-[#a8b0bc]">
                    <Icon className="size-2.5"><path d="M1 6c2.500-3.500 7.500-3.500 10 0-2.500 3.500-7.500 3.500-10 0z" /><circle cx="6" cy="6" r="1.200" /></Icon>
                </button>
                <span className="h-full w-2.5" />
                <span className="h-full w-0.5 bg-[#4f80ff]" />
                <span className="ml-3 size-[9px] bg-white" />
                <span className="ml-1">圖層 1</span>
                <button aria-label="設為目標" className="mr-2.5 ml-auto text-[#b5bcc6]"><Icon className="size-2"><circle cx="6" cy="6" r="4" /></Icon></button>
            </li>
        </ul>
        <div className="flex h-3 shrink-0 items-center">
            <span className="pl-px text-[#d6d6d6]">1 個圖層</span>
            <div className="mr-3 ml-auto flex gap-1.5">
                <IconButton icon="locate" label="找出物件" dim />
                <IconButton icon="options" label="製作剪裁遮色片" dim />
                <IconButton icon="newItem" label="製作新子圖層" />
                <IconButton icon="newItem" label="製作新圖層" />
                <IconButton icon="trash" label="刪除選取範圍" dim />
            </div>
        </div>
    </div>
);

const Dock = () => (
    <aside className="flex w-[130px] shrink-0 flex-col border-x border-[#2f2f2f] bg-[#4a4a4a]">
        <div className="flex h-[7px] shrink-0 items-center justify-end bg-[#2f2f2f] pr-px text-[#aaa]"><CollapseIcon flip /></div>
        <PanelTabs tabs={['顏色', '色彩參考']} initial="顏色" collapsible />
        <PanelTabs tabs={['色票', '筆刷', '符號']} initial="色票" />
        <SwatchesPanel />
        <PanelTabs tabs={['筆畫', '漸層', '透明度']} initial="筆畫" collapsible />
        <StrokePanel />
        <PanelTabs tabs={['外觀', '程式庫', '繪圖樣式']} initial="繪圖樣式" />
        <PanelTabs tabs={['圖層', '工作區域']} initial="圖層" />
        <LayersPanel />
    </aside>
);

// ---------------------------------------------------------------------------
// Document window
// ---------------------------------------------------------------------------

const StatusBar = () => (
    <footer className="flex h-2.5 shrink-0 items-center bg-[#3a3a3a] text-[#c8c8c8]">
        <div className="flex h-full w-[260px] shrink-0 items-center bg-[#484848]">
            <Icon className="ml-[3px] h-2 w-2.5 text-[#666]"><path d="M1 3h4v6H1zM7 3h4v6H7z" /></Icon>
            <button aria-label="共用" className="ml-1.5"><Icon className="size-2"><path d="M5 3H1v7h8V7M4 7c0-3 2-4 5-4M8 .5L11 3 8 5.500" strokeWidth="1.500" /></Icon></button>
            <Dropdown id="zoom-level" label="縮放顯示" value="300%" className="ml-1.5 w-[35px]" />
            <span className="flex w-6 items-center justify-center gap-1 text-[#777]">
                <button aria-label="第一個"><Icon className="size-1.5"><path d="M2 1v10M11 1v10L4 6z" fill="currentColor" /></Icon></button>
                <button aria-label="上一個"><Icon className="size-1.5"><path d="M9 1v10L3 6z" fill="currentColor" /></Icon></button>
            </span>
            <Dropdown id="artboard-nav" label="工作區域導覽" value="1" className="w-[30px]" />
            <span className="flex w-6 items-center justify-center gap-1 text-[#777]">
                <button aria-label="下一個"><Icon className="size-1.5"><path d="M3 1v10l6-5z" fill="currentColor" /></Icon></button>
                <button aria-label="最後一個"><Icon className="size-1.5"><path d="M10 1v10M1 1v10l7-5z" fill="currentColor" /></Icon></button>
            </span>
            <span className="flex-1 text-center">選取</span>
            <button aria-label="狀態選單" className="mr-px -rotate-90"><DownArrow /></button>
        </div>
        <div className="flex h-full flex-1 items-center justify-between border-t border-[#2a2a2a] bg-[#363636] px-0.5 text-[#e0e0e0]">
            <button aria-label="向左捲動" className="rotate-90"><DownArrow /></button>
            <span className="h-2 w-2 bg-[#999]" />
            <button aria-label="向右捲動" className="-rotate-90"><DownArrow /></button>
        </div>
        <span className="h-full w-[11px] bg-[#484848]" />
    </footer>
);

const DocumentWindow = () => (
    <main className="relative flex min-w-0 flex-1 flex-col">
        <div className="flex h-[11px] shrink-0 items-stretch bg-[#323232]">
            <div className="flex items-center gap-1 border-r border-[#222] bg-[#484848] pr-0.5 pl-[5px] whitespace-nowrap text-[#c4c4c4]">
                未命名-1* @ 300% (RGB/預視)
                <button aria-label="關閉文件">×</button>
            </div>
        </div>
        <div className="flex min-h-0 flex-1">
            <div className="flex flex-1 items-center justify-center bg-[#5e5e5e] pr-[26px] pb-5">
                <div className="size-80 shrink-0 border border-black bg-white" />
            </div>
            <div className="flex w-[11px] flex-col items-center justify-end bg-[#363636] pt-2 text-[#e0e0e0]">
                <span className="my-auto size-2 bg-[#999]" />
                <button aria-label="向下捲動" className="flex h-2 items-center"><DownArrow /></button>
            </div>
        </div>
        <StatusBar />
        <FloatingPanels />
        {/* Mouse pointer */}
        <svg viewBox="0 0 8 12" className="pointer-events-none absolute top-[227px] left-[674px] h-3 w-2" aria-hidden="true">
            <path d="M.5.500v9l2-2 1.500 3.500 1.500-.7L4 7h2.700z" fill="#000" stroke="#999" strokeWidth=".5" />
        </svg>
    </main>
);

const App = () => (
    <div className="flex h-screen flex-col overflow-hidden bg-[#484848] font-['Noto_Sans','Noto_Sans_CJK_TC',sans-serif] text-[7px] leading-[10px] select-none">
        <MenuBar />
        <OptionsBar />
        <div className="flex min-h-0 flex-1">
            <ToolBox />
            <DocumentWindow />
            <Dock />
        </div>
    </div>
);

export default App;
